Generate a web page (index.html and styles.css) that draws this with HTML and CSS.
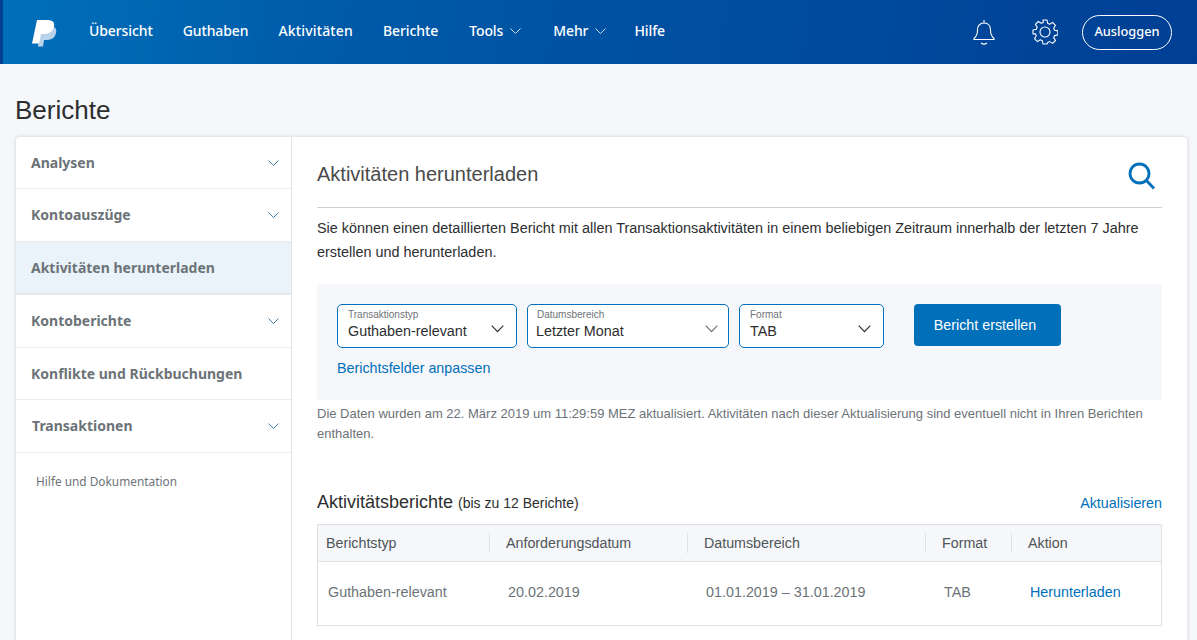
FILE: index.html
```html
<!DOCTYPE html>
<html lang="de">
<head>
<meta charset="utf-8">
<title>Berichte</title>
<link rel="stylesheet" href="styles.css">
</head>
<body>
<header class="topbar">
  <svg class="logo" width="26" height="28" viewBox="0 0 26 28">
    <path fill="#b9d3ea" d="M8 7h10c5 0 7 3 6 7-1 5-5 7-9 7h-3l-1 6.500H6z"/>
    <path fill="#ffffff" d="M5 1h10c5 0 8 2 7 6-1 6-5 8-10 8H9l-2 9.500H0z"/>
  </svg>
  <nav class="mainnav">
    <a class="navitem">Übersicht</a>
    <a class="navitem">Guthaben</a>
    <a class="navitem wide">Aktivitäten</a>
    <a class="navitem reports">Berichte</a>
    <a class="navitem tools">Tools <svg class="navchev" width="11" height="6" viewBox="0 0 11 6"><path d="M.5.500l5 5 5-5" fill="none" stroke="#cfe0f2"/></svg></a>
    <a class="navitem more">Mehr <svg class="navchev" width="11" height="6" viewBox="0 0 11 6"><path d="M.5.500l5 5 5-5" fill="none" stroke="#cfe0f2"/></svg></a>
    <a class="navitem">Hilfe</a>
  </nav>
  <div class="topactions">
    <svg class="bell" width="24" height="26" viewBox="0 0 24 26"><path d="M12 1v3M12 4c-4.500 0-6.500 3.500-6.500 7 0 4-1 6.500-3.500 8.500v1h20v-1c-2.500-2-3.500-4.500-3.500-8.500 0-3.500-2-7-6.500-7zM9 24c2 1.500 4 1.500 6 0" fill="none" stroke="#fff" stroke-width="1.100"/></svg>
    <svg class="gear" width="26" height="26" viewBox="0 0 26 26"><path d="M11 1h4l.7 3.300 2 .9L20.600 3.400l2.900 2.900-1.800 2.900.9 2 3.300.7v4l-3.300.7-.9 2 1.800 2.900-2.900 2.900-2.900-1.800-2 .9L15 25h-4l-.7-3.300-2-.9-2.900 1.800-2.900-2.900 1.800-2.900-.9-2L1 15v-4l3.300-.7.9-2-1.800-2.900 2.900-2.900 2.900 1.800 2-.9z" fill="none" stroke="#fff" stroke-width="1.100" stroke-linejoin="round"/><circle cx="13" cy="13" r="5" fill="none" stroke="#fff" stroke-width="1.100"/></svg>
    <a class="logout">Ausloggen</a>
  </div>
</header>

<main class="page">
  <h1 class="pagetitle">Berichte</h1>
  <div class="card">
    <aside class="sidebar">
      <div class="sideitem short"><span>Analysen</span><svg width="11" height="6" viewBox="0 0 11 6"><path d="M.5.500l5 5 5-5" fill="none" stroke="#3f7fa8"/></svg></div>
      <div class="sideitem"><span>Kontoauszüge</span><svg width="11" height="6" viewBox="0 0 11 6"><path d="M.5.500l5 5 5-5" fill="none" stroke="#3f7fa8"/></svg></div>
      <div class="sideitem active"><span>Aktivitäten herunterladen</span></div>
      <div class="sideitem"><span>Kontoberichte</span><svg width="11" height="6" viewBox="0 0 11 6"><path d="M.5.500l5 5 5-5" fill="none" stroke="#3f7fa8"/></svg></div>
      <div class="sideitem short"><span>Konflikte und Rückbuchungen</span></div>
      <div class="sideitem nudge"><span>Transaktionen</span><svg width="11" height="6" viewBox="0 0 11 6"><path d="M.5.500l5 5 5-5" fill="none" stroke="#3f7fa8"/></svg></div>
      <div class="sidehelp">Hilfe und Dokumentation</div>
    </aside>
    <section class="content">
      <div class="contenthead">
        <h2 class="contenttitle">Aktivitäten herunterladen</h2>
        <svg class="search" width="28" height="28" viewBox="0 0 28 28"><circle cx="11.500" cy="11.500" r="9.500" fill="none" stroke="#0070ba" stroke-width="2.800"/><path d="M18 18l8 8.500" stroke="#0070ba" stroke-width="2.800" fill="none"/></svg>
      </div>
      <p class="intro">Sie können einen detaillierten Bericht mit allen Transaktionsaktivitäten in einem beliebigen Zeitraum innerhalb der letzten 7 Jahre erstellen und herunterladen.</p>
      <div class="filterbox">
        <div class="filterrow">
          <div class="select w1">
            <div class="selectlabel">Transaktionstyp</div>
            <div class="selectvalue">Guthaben-relevant</div>
            <svg class="selectchev" width="13" height="8" viewBox="0 0 13 8"><path d="M.7.700l5.800 6 5.800-6" fill="none" stroke="#2c2e2f" stroke-width="1.200"/></svg>
          </div>
          <div class="select w2">
            <div class="selectlabel shift">Datumsbereich</div>
            <div class="selectvalue shift">Letzter Monat</div>
            <svg class="selectchev" width="13" height="8" viewBox="0 0 13 8"><path d="M.7.700l5.800 6 5.800-6" fill="none" stroke="#6c7378" stroke-width="1.200"/></svg>
          </div>
          <div class="select w3">
            <div class="selectlabel">Format</div>
            <div class="selectvalue">TAB</div>
            <svg class="selectchev" width="13" height="8" viewBox="0 0 13 8"><path d="M.7.700l5.800 6 5.800-6" fill="none" stroke="#2c2e2f" stroke-width="1.200"/></svg>
          </div>
          <a class="primary">Bericht erstellen</a>
        </div>
        <a class="link customize">Berichtsfelder anpassen</a>
      </div>
      <p class="note">Die Daten wurden am 22. März 2019 um 11:29:59 MEZ aktualisiert. Aktivitäten nach dieser Aktualisierung sind eventuell nicht in Ihren Berichten enthalten.</p>
      <div class="tablehead">
        <div class="tabletitle">Aktivitätsberichte <small>(bis zu 12 Berichte)</small></div>
        <a class="link">Aktualisieren</a>
      </div>
      <div class="table">
        <div class="thead">
          <div class="th c1">Berichtstyp</div>
          <div class="th c2 sep">Anforderungsdatum</div>
          <div class="th c3 sep">Datumsbereich</div>
          <div class="th c4 sep">Format</div>
          <div class="th c5 sep">Aktion</div>
        </div>
        <div class="trow">
          <div class="td c1">Guthaben-relevant</div>
          <div class="td c2">20.02.2019</div>
          <div class="td c3">01.01.2019 – 31.01.2019</div>
          <div class="td c4">TAB</div>
          <div class="td c5"><a class="link">Herunterladen</a></div>
        </div>
      </div>
    </section>
  </div>
</main>
</body>
</html>
```
FILE: styles.css
```css
* { box-sizing: border-box; }
html, body { margin: 0; height: 640px; overflow: hidden; }
body { background: #f5f7fa; font-family: "Liberation Sans", Arial, sans-serif; color: #2c2e2f; }

.topbar {
  height: 64px;
  display: flex;
  align-items: center;
  padding: 0 25px 0 29px;
  background: linear-gradient(100deg, #0070ba 0%, #0059a8 30%, #003f94 100%);
  border-left: 3px solid #003f94;
}
.logo { flex: none; margin-top: 1px; }
.mainnav { display: flex; margin-left: 31px; padding-bottom: 3px; font-family: "Noto Sans", sans-serif; font-size: 14px; font-weight: 500; letter-spacing: -.1px; color: #fff; }
.navitem { margin-right: 30px; display: flex; align-items: center; gap: 7px; white-space: nowrap; }
.navitem.wide { letter-spacing: .15px; }
.navitem.reports { margin-right: 31px; }
.navitem.tools { margin-right: 32px; }
.navitem.more { margin-right: 28px; }
.navchev { margin-top: 1px; }
.topactions { margin-left: auto; display: flex; align-items: center; }
.bell { margin-right: 36px; }
.gear { margin-right: 24px; }
.logout {
  width: 90px; height: 35px; border: 1px solid #fff; border-radius: 18px; padding-bottom: 2px;
  display: flex; align-items: center; justify-content: center;
  font-family: "Noto Sans", sans-serif; font-size: 12.800px; color: #fff; font-weight: 500;
}

.page { padding: 0 10px 0 16px; }
.pagetitle { margin: 30px 0 0 -1px; height: 43px; font-size: 26px; line-height: 32px; font-weight: 400; color: #2c2e2f; }
.card {
  display: flex; height: 520px; background: #fff; border-radius: 4px 4px 0 0;
  box-shadow: 0 0 4px rgba(0,0,0,.16);
}
.sidebar { width: 276px; flex: none; border-right: 1px solid #e4e6e8; }
.sideitem {
  height: 53px; display: flex; align-items: center; justify-content: space-between;
  padding: 0 12px 0 15px; border-bottom: 1px solid #e9ebed;
  font-family: "Noto Sans", sans-serif; font-size: 14px; font-weight: 700; color: #6c7378;
}
.sideitem span { padding-bottom: 2px; }
.sideitem.short { height: 52px; }
.sideitem.short span { padding-bottom: 0; }
.sideitem.active { background: #eaf3f9; border-bottom: 2px solid #e6e9ec; }
.sideitem.active span { padding-bottom: 0; }
.nudge span { margin-left: 1px; }
.sidehelp { padding: 20px 20px; font-family: "Noto Sans", sans-serif; font-size: 11.850px; color: #6c7378; }

.content { flex: 1; padding: 0 25px; min-width: 0; }
.contenthead {
  height: 71px; display: flex; align-items: center; justify-content: space-between;
  border-bottom: 1px solid #cbd2d6; padding: 0 6px 0 0;
}
.contenttitle { margin: 0; font-size: 20px; font-weight: 400; color: #4a4a4a; position: relative; top: 2px; }
.search { position: relative; top: 4px; }
.intro { margin: 8px 0 0; font-size: 14.420px; line-height: 24px; color: #2c2e2f; }
.filterbox { margin-top: 20px; height: 116px; background: #f5f7fa; padding: 20px; }
.filterrow { display: flex; align-items: flex-start; gap: 10px; }
.select { position: relative; height: 44px; background: #fff; border: 1px solid #0070ba; border-radius: 5px; padding: 4px 10px; flex: none; }
.w1 { width: 180px; }
.w2 { width: 202px; }
.w3 { width: 145px; }
.selectlabel { font-size: 10px; line-height: 11px; color: #6c7378; }
.selectvalue { font-size: 14.350px; line-height: 20px; margin-top: 1px; color: #2c2e2f; }
.selectvalue.shift { margin-left: -2px; }
.selectlabel.shift { margin-left: -1px; }
.selectchev { position: absolute; right: 12px; top: 20px; }
.w2 .selectchev { right: 10px; }
.primary {
  margin-left: 20px; width: 147px; height: 42px; background: #0070ba; color: #fff; border-radius: 4px; padding-right: 5px;
  display: flex; align-items: center; justify-content: center; font-size: 14.300px;
}
.link { color: #0070ba; font-size: 14.300px; }
.customize { display: block; margin-top: 11px; line-height: 18px; }
.note { margin: 4px 0 0; font-size: 13px; line-height: 19.500px; color: #6c7378; }
.tablehead { margin-top: 47px; height: 25px; display: flex; align-items: center; justify-content: space-between; }
.tabletitle { font-size: 18px; color: #2c2e2f; }
.tabletitle small { font-size: 14px; }
.table { margin-top: 9px; border: 1px solid #dfe1e3; height: 102px; }
.thead { height: 37px; display: flex; align-items: center; background: #f5f7fa; border-bottom: 1px solid #dfe1e3; font-size: 14.250px; color: #4f5559; }
.th { height: 20px; line-height: 20px; padding-left: 8px; }
.sep { border-left: 1px solid #dfe1e3; padding-left: 16px; }
.trow { height: 62px; display: flex; padding-top: 21px; font-size: 14.350px; line-height: 18px; color: #6c7378; }
.td { padding-left: 19px; }
.td.c1 { padding-left: 10px; }
.c1 { width: 171px; }
.c2 { width: 198px; }
.c3 { width: 238px; }
.c4 { width: 86px; }
.c5 { width: 150px; }
```
